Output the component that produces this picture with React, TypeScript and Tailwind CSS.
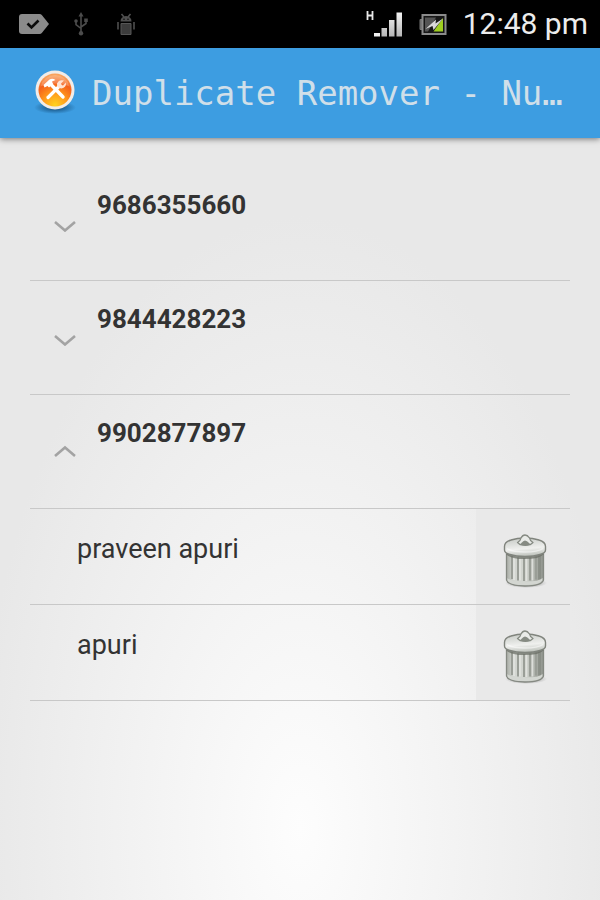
import React, { useState } from 'react';

type Group = {
  number: string;
  contacts: string[];
};

const initialGroups: Group[] = [
  { number: '9686355660', contacts: [] },
  { number: '9844428223', contacts: [] },
  { number: '9902877897', contacts: ['praveen apuri', 'apuri'] },
];

const TagIcon = () => (
  <svg width="32" height="22" viewBox="0 0 32 22" aria-hidden="true">
    <path d="M4 1h17.500q1.500 0 2.500 1.200L31 11l-7 8.800q-1 1.200-2.500 1.200H4q-3 0-3-3V4q0-3 3-3z" fill="#8b8b8b" />
    <path d="M9.500 10.500l4 4 7-7" fill="none" stroke="#0c0c0c" strokeWidth="2.600" />
  </svg>
);

const UsbIcon = () => (
  <svg width="14" height="24" viewBox="0 0 14 24" aria-hidden="true" fill="#4c4c4c" stroke="#4c4c4c">
    <path d="M7 3v18M2 9v3.500l5 4M12 8.500v3l-5 3.500" fill="none" strokeWidth="1.600" />
    <path d="M7 0l2.500 4.500h-5z" stroke="none" />
    <circle cx="7" cy="21.300" r="2.200" stroke="none" />
    <circle cx="2" cy="9" r="1.800" stroke="none" />
    <path d="M10.200 6.500h3.600v3.500h-3.600z" stroke="none" />
  </svg>
);

const AndroidIcon = () => (
  <svg width="20" height="23" viewBox="0 0 20 23" aria-hidden="true" fill="#4f4f4f">
    <path d="M4.500 8.500q0-5 5.500-5.500 5.500.500 5.500 5.500z" />
    <path d="M5.500 1l2.500 3M14.500 1L12 4M2 9v7.500M18 9v7.500" stroke="#4f4f4f" strokeWidth="1.600" fill="none" />
    <path d="M5 10.500h10v11H5z" fill="#3c3c3c" stroke="#565656" />
    <circle cx="8" cy="6.300" r=".7" fill="#000" />
    <circle cx="12" cy="6.300" r=".7" fill="#000" />
  </svg>
);

const SignalIcon = () => (
  <svg width="37" height="28" viewBox="0 0 37 28" role="img" aria-label="H signal">
    <defs>
      <linearGradient id="bars" x1="0" y1="0" x2="0" y2="1">
        <stop offset="0" stopColor="#f4f4f4" />
        <stop offset="1" stopColor="#b5b5b5" />
      </linearGradient>
    </defs>
    <path d="M1.500 1v9M6.500 1v9M1.500 5.500h5" stroke="#e8e8e8" strokeWidth="1.800" fill="none" />
    <path d="M8 23h6v3.500H8z" fill="#f0f0f0" />
    <path d="M15.500 18h5.500v8.500h-5.500zM23 10h5.500v16.500H23zM30.500 2.500H36v24h-5.500z" fill="url(#bars)" />
  </svg>
);

const BatteryIcon = () => (
  <svg width="28" height="21" viewBox="0 0 28 21" role="img" aria-label="Battery charging">
    <path d="M3 5.500H1v10h2" fill="#666" stroke="#777" />
    <path d="M3.500 1h23v19h-23z" fill="#171717" stroke="#8b8b8b" strokeWidth="2" />
    <path d="M6 3.500h11L9 17.500H6z" fill="#555" />
    <path d="M24 4v13.500h-9.500z" fill="#9fce20" />
    <path d="M17 5.500L6.500 15l7-3 1 4L24 4.500l-7.500 5z" fill="#d9d9d9" />
  </svg>
);

const AppIcon = () => (
  <svg width="42" height="48" viewBox="0 0 42 48" aria-hidden="true">
    <defs>
      <radialGradient id="orb" cx=".5" cy=".95" r=".9">
        <stop offset="0" stopColor="#ffd21f" />
        <stop offset=".4" stopColor="#ff9a1c" />
        <stop offset=".75" stopColor="#f4601c" />
        <stop offset="1" stopColor="#f9a25c" />
      </radialGradient>
      <radialGradient id="orbShadow">
        <stop offset="0" stopColor="#0b3a62" stopOpacity=".9" />
        <stop offset="1" stopColor="#0b3a62" stopOpacity="0" />
      </radialGradient>
    </defs>
    <ellipse cx="21" cy="38.500" rx="21" ry="6.500" fill="url(#orbShadow)" />
    <circle cx="21" cy="21" r="19.500" fill="#f1ece8" />
    <circle cx="21" cy="21" r="16.500" fill="url(#orb)" />
    <path d="M7 17q2-10 14-11 12 1 14 11-14-5-28 0z" fill="#fff" opacity=".22" />
    <path d="M17 15.500L29 28" stroke="#fff" strokeWidth="3.400" strokeLinecap="round" />
    <path d="M10.500 18.500l-1-2.500 6-5.500q3-1.500 6 .500l-3.500 1.500 1 2.500-4 3.500-1.500-1.500z" fill="#fff" />
    <path d="M14 28.500L26 16.500" stroke="#fff" strokeWidth="3.200" strokeLinecap="round" />
    <path d="M30 11.500l-3 3 .500 1.500 1.500.500 3-3q.500 5-4.500 6-5-.500-4.500-5 2-4.500 7-3z" fill="#ffe3d2" />
  </svg>
);

const TrashIcon = ({ id }: { id: string }) => (
  <svg width="44" height="56" viewBox="0 0 44 56" aria-hidden="true">
    <defs>
      <linearGradient id={`body-${id}`}>
        <stop offset="0" stopColor="#a9ada6" />
        <stop offset=".2" stopColor="#d3d6d1" />
        <stop offset=".5" stopColor="#d0d3cd" />
        <stop offset="1" stopColor="#8f938c" />
      </linearGradient>
      <linearGradient id={`lid-${id}`} x1="0" y1="0" x2=".2" y2="1">
        <stop offset="0" stopColor="#c4c8c3" />
        <stop offset=".65" stopColor="#eff0ee" />
        <stop offset="1" stopColor="#c3c7c1" />
      </linearGradient>
      <radialGradient id={`ground-${id}`}>
        <stop offset="0" stopColor="#333" stopOpacity=".6" />
        <stop offset="1" stopColor="#333" stopOpacity="0" />
      </radialGradient>
    </defs>
    <ellipse cx="23" cy="50" rx="21" ry="5" fill={`url(#ground-${id})`} />
    <path d="M3.500 19v28q2 6 18.500 6t18.500-6V19z" fill={`url(#body-${id})`} stroke="#858982" strokeWidth="1.300" />
    <path d="M9 23v23M15 24.500v23M21 25v23M27 24.500v23M33 23.500v23" stroke="#9a9e97" strokeWidth="2" />
    <path d="M11 24v23M17 24.500v23M23.500 25v23M29.500 24.500v23" stroke="#e6e8e4" strokeWidth="1.600" opacity=".8" />
    <path d="M36.500 22.500v24" stroke="#7c8179" strokeWidth="3" opacity=".55" />
    <path d="M4.500 45q3 3.500 17.500 3.500T39.500 45v2.500Q37 52 22 52T4.500 47.500z" fill="#d3d6d1" />
    <path d="M4 20.500q4 4.500 18 4.500t18-4.500" stroke="#666b63" strokeWidth="2" fill="none" opacity=".7" />
    <path d="M1.500 13.500q0-4.500 6.500-6.500 6-2 14-2t14 2q6.500 2 6.500 6.500v3.500q0 3-5.500 4.500Q31 23.500 22 23.500T7 21.500q-5.500-1.500-5.500-4.500z" fill={`url(#lid-${id})`} stroke="#80847d" strokeWidth="1.400" />
    <path d="M4 15.500q5 3.500 18 3.500t18-3.500" stroke="#fff" strokeWidth="1.500" fill="none" opacity=".5" />
    <path d="M14.500 9.500Q17.500 8 18 5q1.500-3 4-3t4.500 3q.500 3 3.500 4.500l-2.500 2H17z" fill="#e9ebe8" stroke="#858a82" strokeWidth="1.300" strokeLinejoin="round" />
    <path d="M17.500 12q.500-3 4.500-4.500 4.500 1.500 5 4.500-4.500 2-9.500 0z" fill="#868b83" />
  </svg>
);

const Chevron = ({ open }: { open: boolean }) => (
  <svg width="24" height="16" viewBox="0 0 24 16" fill="none" stroke="#a3a3a3" strokeWidth="2.600" aria-hidden="true">
    <path d={open ? 'M2 12l10-8.500L22 12' : 'M2 6l10 8.500L22 6'} />
  </svg>
);

const StatusBar = () => (
  <div className="flex h-12 items-center bg-black pl-[18px] pr-3">
    <TagIcon />
    <div className="ml-6 flex items-center gap-7">
      <UsbIcon />
      <AndroidIcon />
    </div>
    <div className="ml-auto flex items-center gap-4">
      <SignalIcon />
      <BatteryIcon />
      <span className="text-[30px] leading-8 text-[#ececec]">12:48 pm</span>
    </div>
  </div>
);

const Header = () => (
  <header className="flex h-[90px] items-center gap-4 bg-[#3d9de1] pl-[34px] pr-8 shadow-[0_1px_6px_rgba(0,0,0,0.5)]">
    <div className="shrink-0">
      <AppIcon />
    </div>
    <h1 className="whitespace-nowrap font-['DejaVu_Sans_Mono',monospace] text-[34px] leading-10 text-[#d0dfe9]">
      Duplicate Remover - Nu…
    </h1>
  </header>
);

export default function App() {
  const [groups, setGroups] = useState(initialGroups);
  const [openNumber, setOpenNumber] = useState('9902877897');

  const removeContact = (number: string, name: string) => {
    setGroups(groups.map((g) => (g.number === number ? { ...g, contacts: g.contacts.filter((c) => c !== name) } : g)));
  };

  return (
    <div className="flex min-h-screen flex-col bg-[radial-gradient(ellipse_54%_68%_at_50%_92%,#fdfdfd,#e8e8e8)] font-[Roboto,sans-serif] leading-8 text-[#333]">
      <StatusBar />
      <Header />
      <main className="px-[30px] pt-[29px]">
        {groups.map((group) => {
          const open = group.number === openNumber;
          return (
            <section key={group.number}>
              <button
                type="button"
                aria-expanded={open}
                onClick={() => setOpenNumber(open ? '' : group.number)}
                className="flex h-[114px] w-full items-center gap-5 border-b border-[#c8c8c8] pl-[23px] text-left"
              >
                <Chevron open={open} />
                <span className="self-start pt-[22px] text-[26px] leading-8 font-bold">{group.number}</span>
              </button>
              {open && (
                <ul>
                  {group.contacts.map((name, i) => (
                    <li key={name} className="flex h-24 border-b border-[#c8c8c8]">
                      <span className="flex-1 pl-[47px] pt-6 text-[27px] leading-8">{name}</span>
                      <button
                        type="button"
                        aria-label={`Delete ${name}`}
                        onClick={() => removeContact(group.number, name)}
                        className="flex w-[94px] items-center justify-center bg-[#e9e9e9] pl-1 pt-2"
                      >
                        <TrashIcon id={`trash-${i}`} />
                      </button>
                    </li>
                  ))}
                </ul>
              )}
            </section>
          );
        })}
      </main>
    </div>
  );
}
